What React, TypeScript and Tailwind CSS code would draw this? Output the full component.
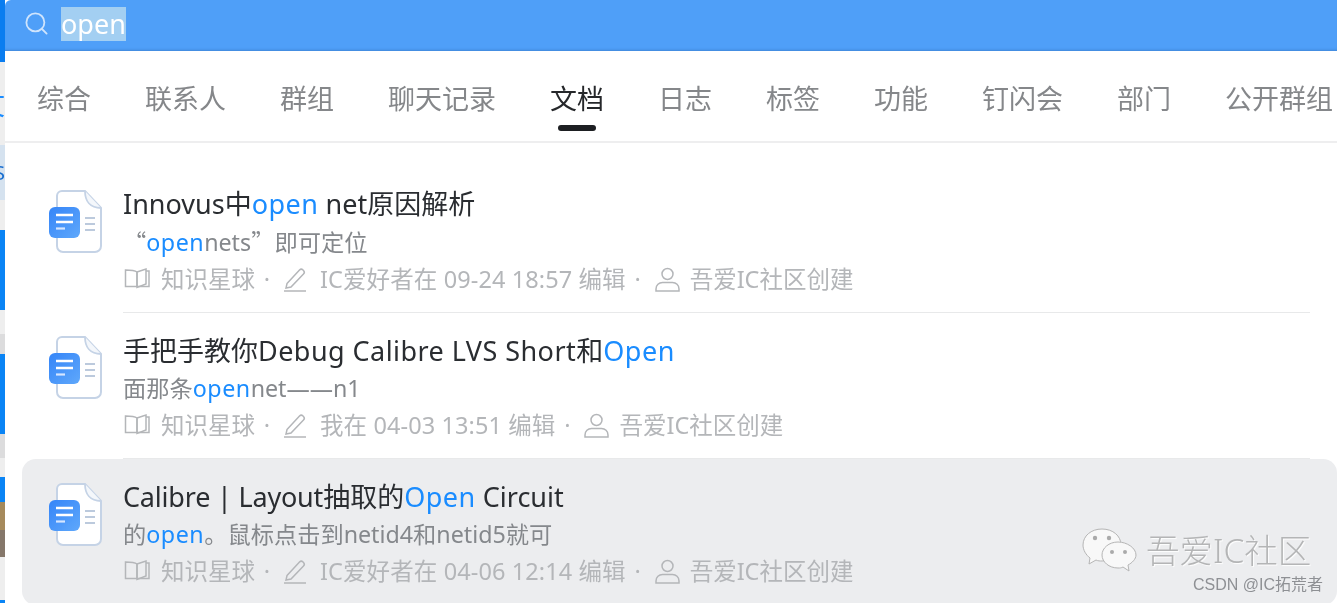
import React from "react";
import { Search } from "lucide-react";

const tabs = ["综合", "联系人", "群组", "聊天记录", "文档", "日志", "标签", "功能", "钉闪会", "部门", "公开群组"];

const O = ({ children }: { children: React.ReactNode }) => <span className="tracking-[0.5px] text-[#1a8cff]">{children}</span>;

const DocIcon = ({ className }: { className: string }) => (
  <svg width="54" height="63" viewBox="0 0 54 63" className={`shrink-0 ${className}`}>
    <defs>
      <linearGradient id="docBlue" x1="0" y1="0" x2="1" y2="1">
        <stop offset="0" stopColor="#3585f8" />
        <stop offset="1" stopColor="#5fa8fb" />
      </linearGradient>
    </defs>
    <path d="M13 1h23l16 17v38a6 6 0 0 1-6 6H14a6 6 0 0 1-6-6V6a5 5 0 0 1 5-5z" fill="#fff" stroke="#c5d3e6" strokeWidth="2" />
    <path d="M36 1c0 10 5 17 16 17" fill="#f4f7fb" stroke="#c5d3e6" strokeWidth="1.8" />
    <rect x="0" y="17" width="31" height="31" rx="6" fill="url(#docBlue)" />
    <path d="M7 25h17M7 32h17" stroke="#fff" strokeWidth="2.4" />
    <path d="M7 38.5h9" stroke="#d6e6ff" strokeWidth="2.2" />
    <path d="M36 28h10M36 34h10M36 40h10" stroke="#bccadd" strokeWidth="1.8" />
  </svg>
);

const BookIcon = () => (
  <svg width="26" height="24" viewBox="0 0 26 24" fill="none" stroke="currentColor" strokeWidth="1.5" className="ml-[1px] shrink-0">
    <path d="M13 5C11 3.500 8 3 1.500 3v16.500H13z" />
    <path d="M13 5l9-3v15l-9 3.500V5z" />
    <path d="M22 4h3v15.500H13" />
  </svg>
);

const PenIcon = () => (
  <svg width="23" height="25" viewBox="0 0 23 25" fill="none" stroke="currentColor" strokeWidth="1.5" className="ml-[5px] shrink-0">
    <path d="M3 16.500 15.500 3a2.500 2.500 0 0 1 3.500 0l.5.5a2.500 2.500 0 0 1 0 3.500L7 20l-5 1z" />
    <path d="M0 24h22" />
  </svg>
);

const UserIcon = () => (
  <svg width="25" height="25" viewBox="0 0 25 25" fill="none" stroke="currentColor" strokeWidth="1.5" className="ml-[5px] shrink-0">
    <circle cx="12.500" cy="7" r="5.500" />
    <path d="M1 24v-2c0-4 3-6.500 6.500-6.500h10c3.500 0 6.500 2.500 6.500 6.500v2z" />
  </svg>
);

const Dot = () => <span className="w-[24px] text-center">·</span>;

const Row = ({ title, sub, editor, creator, rowClass, iconClass }: { title: React.ReactNode; sub: React.ReactNode; editor: string; creator: string; rowClass: string; iconClass: string }) => (
  <div className={`flex shrink-0 items-start pl-[27px] ${rowClass}`}>
    <DocIcon className={iconClass} />
    <div className="ml-[20px] flex flex-col whitespace-nowrap pt-[19px]">
      <div className="text-[27px] leading-[38px] text-[#2a2d31]">{title}</div>
      <div className="text-[23.25px] leading-[37px] text-[#85888c]">{sub}</div>
      <div className="flex items-center text-[23.5px] leading-[36px] text-[#b4b6b9]">
        <BookIcon />
        <span className="ml-[11px]">知识星球</span>
        <Dot />
        <PenIcon />
        <span className="ml-[13px] tracking-[0.1px]">{editor}</span>
        <Dot />
        <UserIcon />
        <span className="ml-[10px]">{creator}</span>
      </div>
    </div>
  </div>
);

export default function App() {
  return (
    <div className="relative flex h-[603px] w-[1337px] overflow-hidden bg-white blur-[0.4px] font-['Noto_Sans','Noto_Sans_CJK_SC',sans-serif]">
      {/* sliver of the window behind */}
      <div className="flex w-[5px] shrink-0 flex-col overflow-hidden bg-[#eeeeee]">
        <div className="h-[62px] shrink-0 bg-[#0a7df0]" />
        <div className="flex h-[83px] shrink-0 items-center justify-end text-[28px] text-[#1a8cff]">文</div>
        <div className="flex h-[55px] shrink-0 items-center justify-end bg-[#d5e2ef] text-[20px] text-[#1a6fd0]">S</div>
        <div className="h-[30px] shrink-0" />
        <div className="h-[80px] shrink-0 bg-[#0a84f5]" />
        <div className="h-[24px] shrink-0" />
        <div className="h-[20px] shrink-0 bg-[#dcdcdd]" />
        <div className="h-[80px] shrink-0 bg-[#0a84f5]" />
        <div className="h-[24px] shrink-0 bg-[#dcdcdd]" />
        <div className="h-[19px] shrink-0" />
        <div className="h-[25px] shrink-0 bg-[#0a84f5]" />
        <div className="h-[28px] shrink-0 bg-[#a68a5c]" />
        <div className="h-[27px] shrink-0 bg-[#85776a]" />
        <div className="h-[43px] shrink-0" />
        <div className="h-[3px] shrink-0 bg-[#0a84f5]" />
      </div>

      <div className="flex min-w-0 flex-1 flex-col">
        <div className="flex h-[51px] shrink-0 items-center rounded-tl-[6px] bg-[#4f9ff8] pb-[4px] pl-[18px] shadow-[inset_0_-3px_3px_-2px_#3f86d6]">
          <Search size={27} strokeWidth={1.6} className="text-[#cfe4fc]" />
          <span className="ml-[11px] bg-[#a3cff2] text-[27px] leading-[34px] text-white">open</span>
        </div>

        <div className="flex h-[92px] shrink-0 items-center gap-[54px] whitespace-nowrap border-b-2 border-[#eeeeef] pl-[32px] pt-[6px]">
          {tabs.map((t) => (
            <div key={t} className={`relative text-[27px] ${t === "文档" ? "text-[#26282b]" : "text-[#85878a]"}`}>
              {t}
              {t === "文档" && <div className="absolute left-[8px] top-[46px] h-[6px] w-[38px] rounded-full bg-[#1d1f22]" />}
            </div>
          ))}
        </div>

        <div className="flex flex-col pl-[17px] pt-[23px]">
          <Row
            title={<>Innovus中<O>open</O> net原因解析</>}
            sub={<><span className="font-['Noto_Sans_CJK_SC',sans-serif]">“</span><O>open</O>nets<span className="font-['Noto_Sans_CJK_SC',sans-serif]">”</span>即可定位</>}
            editor="IC爱好者在 09-24 18:57 编辑"
            creator="吾爱IC社区创建"
            rowClass="h-[146px]"
            iconClass="mt-[24px]"
          />
          <div className="ml-[101px] mr-[27px] h-px shrink-0 bg-[#e8e9ea]" />
          <Row
            title={<>手把手教你<span className="tracking-[0.45px]">Debug Calibre LVS Short</span>和<O>Open</O></>}
            sub={<>面那条<O>open</O>net——n1</>}
            editor="我在 04-03 13:51 编辑"
            creator="吾爱IC社区创建"
            rowClass="h-[145px]"
            iconClass="mt-[23px]"
          />
          <div className="ml-[101px] mr-[27px] h-px shrink-0 bg-[#e8e9ea]" />
          <Row
            title={<><span className="tracking-[-0.2px]">Calibre | Layout</span>抽取的<O>Open</O> Circuit</>}
            sub={<>的<O>open</O>。鼠标点击到netid4和netid5就可</>}
            editor="IC爱好者在 04-06 12:14 编辑"
            creator="吾爱IC社区创建"
            rowClass="h-[146px] rounded-[14px] bg-[#ecedef]"
            iconClass="mt-[24px]"
          />
        </div>
      </div>

      {/* watermark */}
      <div className="absolute left-[1082px] top-[527px] flex items-center">
        <svg width="56" height="46" viewBox="0 0 56 46">
          <path d="M20 2C9 2 1 9 1 18c0 5 3 10 7 13l-1 6 7-4c2 1 4 1 6 1 9 0 19-7 19-16S31 2 20 2z" fill="#f8f8f8" stroke="#b5b5b5" />
          <path d="M36 15c-9 0-16 6-16 13s7 13 16 13c2 0 3 0 5-1l6 4-1-6c4-2 8-6 8-10 0-7-9-13-18-13z" fill="#f8f8f8" stroke="#b5b5b5" />
          <circle cx="13" cy="11" r="2.200" fill="#aaa" />
          <circle cx="27" cy="11" r="2.200" fill="#aaa" />
          <circle cx="30" cy="25" r="2" fill="#aaa" />
          <circle cx="43" cy="25" r="2" fill="#aaa" />
        </svg>
        <span className="ml-[8px] text-[33.5px] font-light leading-[44px] text-[#b4b5b6] [text-shadow:1px_1px_1px_#fff]">吾爱IC社区</span>
      </div>
      <div className="absolute left-[1193px] top-[575px] font-['Liberation_Sans','Noto_Sans_CJK_SC',sans-serif] text-[16px] leading-[20px] text-[#8e9094]">CSDN @IC拓荒者</div>
    </div>
  );
}
